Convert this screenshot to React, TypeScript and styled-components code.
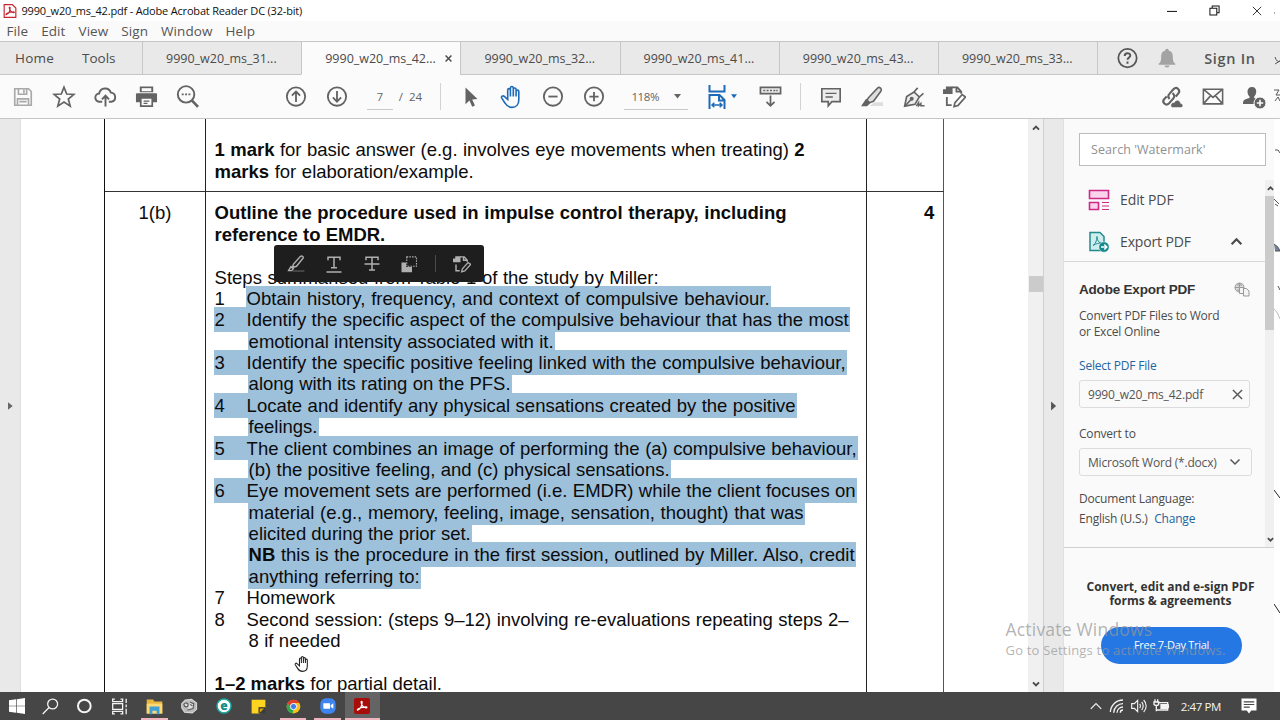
import { ReactNode } from 'react'
import styled, { createGlobalStyle, css } from 'styled-components'

const GlobalStyle = createGlobalStyle`
  * {
    box-sizing: border-box;
  }

  body {
    margin: 0;
    overflow: hidden;
    font-family: 'Open Sans', 'Noto Sans', sans-serif;
    color: #4b4b4b;
  }
`

const Screen = styled.div`
  position: relative;
  width: 1280px;
  height: 720px;
  display: flex;
  flex-direction: column;
  overflow: hidden;
  background: #fff;
`

const Text = styled.span<{ $size?: number; $ls?: number; $color?: string; $weight?: number }>`
  font-size: ${p => p.$size ?? 12}px;
  letter-spacing: ${p => (p.$ls === undefined ? 'inherit' : `${p.$ls}px`)};
  color: ${p => p.$color ?? 'inherit'};
  font-weight: ${p => p.$weight ?? 400};
  white-space: nowrap;
`

/* ---------- title and menu ---------- */

const TitleBar = styled.header`
  height: 21px;
  display: flex;
  align-items: center;
  padding-left: 3px;
  gap: 4.5px;
  color: #111;
`

const WindowButtons = styled.div`
  margin-left: auto;
  display: flex;
  align-items: center;
  gap: 32px;
  padding-right: 18.5px;
  height: 19px;
`

const MenuBar = styled.nav`
  height: 20px;
  display: flex;
  align-items: center;
  padding-left: 6.5px;
  gap: 13px;
  background: #fafafa;
  color: #555;
`

/* ---------- tabs ---------- */

const TabBar = styled.div`
  height: 34px;
  display: flex;
  background: #e9e9e9;
  border-top: 1px solid #c6c6c6;
`

const HomeTabs = styled.div`
  width: 142px;
  display: flex;
  align-items: center;
  padding-left: 15px;
  gap: 28px;
  border-bottom: 1px solid #c6c6c6;
`

const Tab = styled.div<{ $active?: boolean }>`
  width: 159.2px;
  display: flex;
  align-items: center;
  padding-left: 23px;
  border-left: 1px solid #c6c6c6;
  border-bottom: 1px solid ${p => (p.$active ? '#fbfbfb' : '#c6c6c6')};
  background: ${p => (p.$active ? '#fbfbfb' : 'transparent')};

  & > svg {
    margin-left: 9px;
  }
`

const Account = styled.div`
  flex: 1;
  display: flex;
  align-items: center;
  padding-left: 19px;
  border-left: 1px solid #c6c6c6;
  border-bottom: 1px solid #c6c6c6;
  color: #555;

  & > svg {
    margin-right: 19px;
  }

  & > span {
    margin-left: 8px;
  }
`

/* ---------- toolbar ---------- */

const ToolBar = styled.div`
  height: 44px;
  display: flex;
  align-items: center;
  padding-left: 2.5px;
  background: #fbfbfb;
  border-bottom: 1px solid #c6c6c6;
  color: #636363;

  & > * {
    flex: none;
  }
`

const Slot = styled.div<{ $w?: number; $color?: string }>`
  width: ${p => p.$w ?? 41.2}px;
  height: 100%;
  display: flex;
  align-items: center;
  justify-content: center;
  color: ${p => p.$color ?? 'inherit'};
`

const Spacer = styled.div<{ $w: number }>`
  width: ${p => p.$w}px;
`

const Divider = styled.div`
  width: 1px;
  height: 27px;
  background: #d2d2d2;
`

const Field = styled.div<{ $w: number }>`
  width: ${p => p.$w}px;
  height: 26px;
  display: flex;
  align-items: center;
  justify-content: space-between;
  padding: 0 7px 0 7px;
  border-bottom: 1px solid #cacaca;
`

const PageField = styled(Field)`
  justify-content: center;
`

/* ---------- workspace ---------- */

const Workspace = styled.main`
  height: 573px;
  display: flex;
  overflow: hidden;

  & > * {
    flex: none;
  }
`

const Rail = styled.div<{ $w: number }>`
  width: ${p => p.$w}px;
  display: flex;
  align-items: center;
  justify-content: center;
  background: #e9e9e9;
  border-right: 1px solid #e0e0e0;
`

const Page = styled.div`
  position: relative;
  width: 1007px;
  padding-left: 83px;
  overflow: hidden;
`

const Table = styled.div`
  width: 840px;
  height: 600px;
  display: grid;
  grid-template-columns: 101px 661px 77px;
  grid-template-rows: 73px 1fr;
  border-left: 1px solid #111;
  font-family: 'Liberation Sans', Arial, sans-serif;
  font-size: 18.5px;
  line-height: 21.375px;
  color: #0c0c0c;
`

const Cell = styled.div<{ $last?: boolean; $top: number; $align?: string }>`
  padding: ${p => p.$top}px 8.6px 0;
  text-align: ${p => p.$align ?? 'left'};
  border-right: 1px solid ${p => (p.$last ? '#555' : '#222')};
  border-bottom: 1px solid #333;
`

const Body = styled.div`
  isolation: isolate;
`

const marked = css`
  &::before {
    content: '';
    position: absolute;
    z-index: -1;
    inset: -2px -1px -1.6px -1px;
    background: #9dc0db;
  }
`

const Row = styled.div`
  height: 21.375px;
  display: flex;
`

const Num = styled.div<{ $marked?: boolean }>`
  position: relative;
  width: 32px;
  ${p => p.$marked && marked}
`

const Line = styled.div<{ $w: number; $indent?: boolean; $marked?: boolean }>`
  position: relative;
  width: ${p => p.$w}px;
  height: 21.375px;
  margin-left: ${p => (p.$indent ? 34 : 0)}px;
  white-space: nowrap;
  text-align-last: justify;
  ${p => p.$marked && marked}
`

const Popup = styled.div`
  position: absolute;
  left: 253px;
  top: 126px;
  width: 210px;
  height: 37px;
  display: flex;
  align-items: center;
  padding-left: 4px;
  border-radius: 3px;
  background: #1e1e1e;
  color: #b0b0b0;
`

const PopupDivider = styled.div`
  width: 1px;
  height: 17px;
  margin: 0 7px;
  background: #4a4a4a;
`

const HandCursor = styled.div`
  position: absolute;
  left: 273px;
  top: 536px;
  line-height: 0;
`

const ScrollBar = styled.div`
  width: 16px;
  display: flex;
  flex-direction: column;
  align-items: center;
  padding: 5px 0 4px;
  background: #f0f0f0;
  border-right: 1px solid #cfcfcf;
`

const Thumb = styled.div<{ $w: number; $h: number; $mt: number }>`
  width: ${p => p.$w}px;
  height: ${p => p.$h}px;
  margin-top: ${p => p.$mt}px;
  margin-bottom: auto;
  background: #cbcbcb;
`

/* ---------- side panel ---------- */

const Side = styled.aside`
  width: 210px;
  display: flex;
  flex-direction: column;
  background: #fafafa;
`

const SearchBox = styled.div`
  width: 187px;
  height: 33px;
  margin: 14px 0 14px 15px;
  padding: 0 11px;
  display: flex;
  align-items: center;
  flex: none;
  border: 1px solid #bcbcbc;
  background: #fff;
  color: #909090;
`

const ToolsArea = styled.div`
  height: 368px;
  display: flex;
  border-bottom: 1px solid #d0d0d0;
`

const Tools = styled.div`
  width: 201px;
`

const ToolRow = styled.div`
  height: 42px;
  display: flex;
  align-items: center;
  padding: 0 22px 3px 24px;

  & > span {
    margin: 0 auto 0 10px;
  }
`

const ToolBody = styled.div`
  display: flex;
  flex-direction: column;
  align-items: flex-start;
  margin-top: -3px;
  padding: 17px 0 0 15px;
  border-top: 1px solid #d8d8d8;
  letter-spacing: -0.2px;
`

const Heading = styled.div`
  width: 171px;
  height: 20px;
  display: flex;
  align-items: center;
  justify-content: space-between;
  font-family: 'Liberation Sans', Arial, sans-serif;
`

const Para = styled.div<{ $mt: number }>`
  display: flex;
  gap: 6.5px;
  height: 16px;
  line-height: 16px;
  margin-top: ${p => p.$mt}px;
`

const Box = styled.div<{ $w: number; $mt: number }>`
  width: ${p => p.$w}px;
  height: 28px;
  margin-top: ${p => p.$mt}px;
  display: flex;
  align-items: center;
  justify-content: space-between;
  padding: 0 6px 0 8px;
  border: 1px solid #dcdcdc;
  border-radius: 3px;
  color: #555;
`

const SideScroll = styled.div`
  width: 9px;
  display: flex;
  flex-direction: column;
  align-items: flex-end;
  padding: 5px 0 4px;
  background: #f0f0f0;
`

const Promo = styled.div`
  display: flex;
  flex-direction: column;
  align-items: center;
  padding: 31.5px 0 0 3px;
  line-height: 14.5px;
  color: #333;
`

const TrialButton = styled.div`
  width: 141px;
  height: 37px;
  margin: 18.5px 0 0 2px;
  display: flex;
  align-items: center;
  justify-content: center;
  border-radius: 19px;
  background: #2577e3;
  color: #fff;
`

const Activate = styled.div`
  position: absolute;
  left: 1005.5px;
  top: 617px;
  display: flex;
  flex-direction: column;
  color: rgba(150, 150, 150, 0.72);
`

const EdgeStrip = styled.div`
  position: absolute;
  right: 0;
  top: 0;
  line-height: 0;
`

/* ---------- taskbar ---------- */

const TaskBar = styled.footer`
  height: 28px;
  display: flex;
  background: #464646;
  color: #f4f4f4;
`

const Task = styled.div<{ $open?: boolean; $active?: boolean }>`
  width: 34.6px;
  display: flex;
  align-items: center;
  justify-content: center;
  border: solid #464646;
  border-width: 0 ${p => (p.$open && !p.$active ? 4 : 0)}px;
  background: ${p => (p.$active ? '#646464' : 'transparent')};
  box-shadow: ${p => (p.$open ? 'inset 0 -2px #f0b4bf' : 'none')};

  &:first-child {
    width: 33.6px;
  }
`

const Tray = styled.div`
  margin-left: auto;
  display: flex;
  align-items: center;
  gap: 6px;
  padding-right: 22px;
`

/* ---------- icons ---------- */

const Icon = styled.svg`
  flex: none;
`

const Svg = ({ s = 22, w = 1.8, fill = 'none', children }: { s?: number; w?: number; fill?: string; children: ReactNode }) => (
  <Icon width={s} height={s} viewBox='0 0 24 24' fill={fill} stroke='currentColor' strokeWidth={w}>
    {children}
  </Icon>
)

const SaveIcon = () => (
  <Svg><path d='M3 3h15l3 3v15H3zM7 3v6h9V3M13 4v4M6 21v-7h12v7M8 17h8' /></Svg>
)

const StarIcon = () => (
  <Svg s={24} w={1.7}><path d='M12 2.2l2.7 6.8 7.2.4-5.6 4.6 1.9 7.1-6.2-4-6.2 4 1.9-7.1L2.1 9.4l7.2-.4z' /></Svg>
)

const CloudIcon = () => (
  <Svg s={23} w={2}>
    <path d='M8.5 17.5H6a4.3 4.3 0 01-.6-8.6A6.3 6.3 0 0117.6 8a4.8 4.8 0 01.6 9.5h-2.7M12 22.5v-11M8.3 15l3.7-3.8 3.7 3.8' />
  </Svg>
)

const PrintIcon = () => (
  <Svg s={23} fill='currentColor' w={0}>
    <path d='M5 1.500h14v6H5zM2 8.500h20a1 1 0 011 1V18H1V9.500a1 1 0 011-1z' />
    <path d='M7 3.300h10v3.200H7z' fill='#fbfbfb' />
    <path d='M6 13.500v8.500h12v-8.500z' fill='#fbfbfb' stroke='currentColor' strokeWidth='1.800' />
    <path d='M9 16.800h6M9 19.300h4' stroke='currentColor' strokeWidth='1.300' />
  </Svg>
)

const FindIcon = () => (
  <Svg s={23} w={2}>
    <circle cx='10.500' cy='9.800' r='8.600' />
    <path d='M16.500 16l6.500 6.800' strokeWidth='2.800' />
    <path d='M6 9.800h2M9.500 9.800h2M13 9.800h2' strokeWidth='2' />
  </Svg>
)

const CircleIcon = ({ d }: { d: string }) => (
  <Svg s={22} w={2}>
    <circle cx='12' cy='11.500' r='10' />
    <path d={d} />
  </Svg>
)

const PointerIcon = () => (
  <Svg fill='currentColor' w={0}><path d='M6 1.500v18.300l4.300-4 3 6.700 3-1.300-3-6.500 5.800-.5z' /></Svg>
)

const HAND = 'M7.700 14.500V5.200c0-2.100 2.700-2.100 2.700 0V3.100c0-2.200 2.900-2.200 2.900 0v1.400c0-2 2.800-2 2.800 0v2.100c0-2 2.700-2 2.700 0v8.200c0 4.500-2.500 7.600-6.800 7.600-3.600 0-5.400-1.700-6.900-4.200l-3.300-5.100c-1-1.800 1.100-3 2.500-1.700z'

const HandIcon = () => (
  <Svg s={24} w={1.600}><path d={HAND + 'M10.400 4.500v7M13.300 4v7.500M16.100 5v6.500'} /></Svg>
)

const Caret = () => (
  <svg width='7' height='5' viewBox='0 0 7 5' fill='currentColor'><path d='M0 0h7L3.500 4.500z' /></svg>
)

const FitIcon = () => (
  <Svg s={24} w={2}>
    <path d='M4.500 0v6.500h15V0M4.500 24V10h10l5 5v9M14 10v5.500h5.500' />
    <path d='M7 20h10M9.300 17.700L7 20l2.300 2.300M14.700 17.700L17 20l-2.300 2.300' strokeWidth='1.500' />
  </Svg>
)

const ReadIcon = () => (
  <Svg s={23}>
    <path d='M1.500 2.500h21v6.500h-21z' fill='#ececec' />
    <path d='M4.500 5.800h2M8 5.800h2M11.500 5.800h2M15 5.800h2M18 5.800h1.500' strokeWidth='1.600' />
    <path d='M12 11v10.500M7.800 17.500l4.200 4.200 4.200-4.200' />
  </Svg>
)

const CommentIcon = () => (
  <Svg><path d='M2 3h20v14h-9l-4 4.500V17H2z' fill='#ececec' /><path d='M6 8h12M6 12h8' strokeWidth='1.500' /></Svg>
)

const MarkerIcon = () => (
  <Svg s={23} w={1.600}>
    <path d='M9 22h14v-4h-9z' fill='#dedede' stroke='none' />
    <path d='M8 13L17.500 3c1.800-1.500 4.800 1 3.400 3.300L13 17l-4 1.500-3-2.500z' fill='#dedede' />
    <path d='M5.500 15.500l3.500 3-3 3H1.500z' fill='currentColor' />
  </Svg>
)

const PenIcon = () => (
  <Svg s={22} w={1.800}>
    <path d='M1.800 22L4 11.500 12 6.500 17.800 12 13 20z' fill='#ececec' />
    <path d='M2.500 21.500L9 14.500' />
    <path d='M12 6.500l4-4.500M17.800 12l4.500-4' />
    <circle cx='9.500' cy='14' r='1.300' fill='currentColor' />
    <path d='M14.500 22l2.500-4v3.500l2.500-2.500v2.500h4' strokeWidth='1.600' />
  </Svg>
)

const EditDocIcon = ({ s = 23 }: { s?: number }) => (
  <Svg s={s} w={1.900}>
    <path d='M0 4.500h3V1.500h7v8H0z' fill='currentColor' stroke='none' />
    <path d='M9 2.500h6l4 4.500v2M14 2v5h5M4 12.500V21h5' />
    <path d='M11.500 22.500l1-4L20 10l3.500 2.500-7.800 8.800z' strokeWidth='1.700' />
  </Svg>
)

const LinkIcon = () => (
  <Svg s={23} w={2.200}>
    <path d='M10 14.500c-2-2-1.700-3.700 0-5.500l4-4.500c3.500-3.500 8 1 5 4.500l-2.500 3M13 8.500c2.500 2 2.500 4 .5 6l-4 4.500c-3.500 3.500-8-1-5-4.500l2.500-2.500' />
    <path d='M12.500 23c-2-3 1-5 2.500-4 1.500-4 6-3 6 .5 2.500 0 3 2.500 1.500 3.500z' fill='currentColor' strokeWidth='0.500' />
  </Svg>
)

const MailIcon = () => (
  <Svg s={22} w={1.700}><path d='M1.500 3.500h21v16h-21zM1.500 3.500l10.500 9 10.500-9M1.500 19.500l8-9M22.500 19.500l-8-9' /></Svg>
)

const UserIcon = () => (
  <Svg s={24} w={0} fill='currentColor'>
    <path d='M10 2c3 0 4.500 2 4.200 5-.2 2-1 3.500-2 4.500v1.500l3 1.500v4.500H1c0-4 1-4.500 6.500-6v-1.500c-1-1-1.800-2.500-2-4.500C5.300 4 7 2 10 2z' />
    <circle cx='18' cy='18' r='6' stroke='#fbfbfb' strokeWidth='1' />
    <path d='M14.800 18h6.400M18 14.800v6.400' stroke='#fbfbfb' strokeWidth='1.600' />
  </Svg>
)

const Chevron = ({ s = 12, w = 4, down }: { s?: number; w?: number; down?: boolean }) => (
  <Svg s={s} w={w}><path d={down ? 'M3 7l9 9 9-9' : 'M3 17l9-9 9 9'} /></Svg>
)

const Cross = ({ s, w = 2 }: { s: number; w?: number }) => (
  <Svg s={s} w={w}><path d='M2 2l20 20M22 2L2 22' /></Svg>
)

const ACROBAT = 'M6 18c3-1 6-6 6.200-11.500.1-1.800-1.700-1.800-1.500 0 .5 4 4 8.500 7.500 8.500 1.600 0 1.600-1.600 0-1.700-4 0-8.500 1-12.200 3.200-1.500 1-1 2 0 1.500z'

const AppIcon = () => (
  <Svg s={14} w={2}>
    <path d='M2 1h14l6 6v16H2z' fill='#fff' stroke='#c5282f' />
    <path d={ACROBAT} fill='none' stroke='#c5282f' />
  </Svg>
)

/* ---------- data ---------- */

const menu = ['File', 'Edit', 'View', 'Sign', 'Window', 'Help']

const tabs = ['31', '42', '32', '41', '43', '33']

type Entry = { n?: string; w: number; text: ReactNode; marked?: boolean }

const entries: Entry[] = [
  { n: '1', w: 523, text: 'Obtain history, frequency, and context of compulsive behaviour.', marked: true },
  { n: '2', w: 602, text: 'Identify the specific aspect of the compulsive behaviour that has the most', marked: true },
  { w: 305, text: 'emotional intensity associated with it.', marked: true },
  { n: '3', w: 599, text: 'Identify the specific positive feeling linked with the compulsive behaviour,', marked: true },
  { w: 262, text: 'along with its rating on the PFS.', marked: true },
  { n: '4', w: 549, text: 'Locate and identify any physical sensations created by the positive', marked: true },
  { w: 69, text: 'feelings.', marked: true },
  { n: '5', w: 610, text: 'The client combines an image of performing the (a) compulsive behaviour,', marked: true },
  { w: 421, text: '(b) the positive feeling, and (c) physical sensations.', marked: true },
  { n: '6', w: 609, text: 'Eye movement sets are performed (i.e. EMDR) while the client focuses on', marked: true },
  { w: 555, text: 'material (e.g., memory, feeling, image, sensation, thought) that was', marked: true },
  { w: 222, text: 'elicited during the prior set.', marked: true },
  { w: 606, text: <><b>NB</b> this is the procedure in the first session, outlined by Miller. Also, credit</>, marked: true },
  { w: 171, text: 'anything referring to:', marked: true },
  { n: '7', w: 88, text: 'Homework' },
  { n: '8', w: 602, text: 'Second session: (steps 9–12) involving re-evaluations repeating steps 2–' },
  { w: 92, text: '8 if needed' },
]

/* ---------- parts ---------- */

const Titles = () => (
  <>
    <TitleBar>
      <AppIcon />
      <Text $size={11} $ls={-0.18}>9990_w20_ms_42.pdf - Adobe Acrobat Reader DC (32-bit)</Text>
      <WindowButtons>
        <Svg s={10} w={2.400}><path d='M0 13h24' /></Svg>
        <Svg s={11} w={2.200}><path d='M2 7h15v15H2zM7 7V2h15v15h-5' /></Svg>
        <Cross s={10} />
      </WindowButtons>
    </TitleBar>
    <MenuBar>
      {menu.map(item => <Text $size={13.5} $ls={0.08} key={item}>{item}</Text>)}
    </MenuBar>
  </>
)

const Tabs = () => (
  <TabBar>
    <HomeTabs>
      <Text $size={13.5} $ls={0.2}>Home</Text>
      <Text $size={13.5}>Tools</Text>
    </HomeTabs>
    {tabs.map(tab => (
      <Tab key={tab} $active={tab === '42'}>
        <Text $size={12.5}>9990_w20_ms_{tab}...</Text>
        {tab === '42' && <Cross s={7} w={5} />}
      </Tab>
    ))}
    <Account>
      <Svg s={21} w={2}>
        <circle cx='12' cy='11.500' r='10.500' />
        <path d='M8.800 9c0-4 6.400-4 6.400-.5 0 2.500-3.200 2.500-3.200 5M12 15.500v2.500' strokeWidth='2.200' />
      </Svg>
      <Svg s={20} fill='#a3a3a3' w={0}><path d='M12 1c1.500 0 2 1 2 2 4 1 5 4 5 8 0 5 1 6 3 8v1H2v-1c2-2 3-3 3-8 0-4 1-7 5-8 0-1 .5-2 2-2zM9 21h6c0 3-6 3-6 0z' /></Svg>
      <Text $size={14.5} $weight={600} $ls={0.7}>Sign In</Text>
    </Account>
  </TabBar>
)

const DocToolbar = () => (
  <ToolBar>
    <Slot $color='#a9a9a9'><SaveIcon /></Slot>
    <Slot><StarIcon /></Slot>
    <Slot><CloudIcon /></Slot>
    <Slot $w={40}><PrintIcon /></Slot>
    <Slot $w={43.4}><FindIcon /></Slot>
    <Spacer $w={65.5} />
    <Slot><CircleIcon d='M12 17.500V6M7.500 10.500L12 6l4.500 4.500' /></Slot>
    <Slot><CircleIcon d='M12 5.500V17M7.500 12.500L12 17l4.500-4.500' /></Slot>
    <Spacer $w={9.5} />
    <PageField $w={26}><Text $size={11}>7</Text></PageField>
    <Spacer $w={6} />
    <Text $size={11.5}>/&nbsp; 24</Text>
    <Spacer $w={18} />
    <Divider />
    <Spacer $w={9.5} />
    <Slot><PointerIcon /></Slot>
    <Slot $color='#1d6bb8'><HandIcon /></Slot>
    <Slot $w={40}><CircleIcon d='M7 11.500h10' /></Slot>
    <Slot><CircleIcon d='M7 11.500h10M12 6.500v10' /></Slot>
    <Spacer $w={10.2} />
    <Field $w={64}><Text $size={11.5} $ls={-0.4}>118%</Text><Caret /></Field>
    <Spacer $w={17} />
    <Slot $w={24} $color='#1d6bb8'><FitIcon /></Slot>
    <Spacer $w={2} />
    <Slot $w={6} $color='#1d6bb8'><Caret /></Slot>
    <Spacer $w={12} />
    <Slot><ReadIcon /></Slot>
    <Spacer $w={9} />
    <Divider />
    <Spacer $w={10} />
    <Slot><CommentIcon /></Slot>
    <Slot><MarkerIcon /></Slot>
    <Slot><PenIcon /></Slot>
    <Slot><EditDocIcon /></Slot>
    <Spacer $w={175.5} />
    <Slot><LinkIcon /></Slot>
    <Slot><MailIcon /></Slot>
    <Slot><UserIcon /></Slot>
  </ToolBar>
)

const SelectionPopup = () => (
  <Popup>
    <Slot $w={37.5}><Svg s={19} w={1.800}><path d='M7 17l1-4L17 3c2-1 4 0 3.500 2L12 15.500zM2 21l3-5 3 2.500-2 2.500z' /><path d='M7 21.500h15' stroke='#555' /></Svg></Slot>
    <Slot $w={37.5}><Svg s={18} w={2}><path d='M4 7V3h16v4M12 3v14M8 17h8M2 22.500h20' /></Svg></Slot>
    <Slot $w={37.5}><Svg s={18} w={2}><path d='M4 7V3h16v4M12 3v17M8 20h8M2 12h20' /></Svg></Slot>
    <Slot $w={37.5}>
      <Svg s={18} w={1.500}>
        <path d='M2 10h6v6h8v7H2z' fill='currentColor' stroke='none' />
        <path d='M9 2.500h13V15H9z' strokeDasharray='2 1.500' />
      </Svg>
    </Slot>
    <PopupDivider />
    <Slot $w={37.5}><EditDocIcon s={18} /></Slot>
  </Popup>
)

const Document = () => (
  <Page>
    <Table>
      <Cell $top={20} />
      <Cell $top={20.4}>
        <Line $w={590}><b>1 mark</b> for basic answer (e.g. involves eye movements when treating) <b>2</b></Line>
        <Line $w={259}><b>marks</b> for elaboration/example.</Line>
      </Cell>
      <Cell $top={20} $last />
      <Cell $top={10} $align='center'>1(b)</Cell>
      <Cell $top={10.4}>
        <Body>
          <Line $w={572}><b>Outline the procedure used in impulse control therapy, including</b></Line>
          <Line $w={170}><b>reference to EMDR.</b></Line>
          <Row />
          <Line $w={444}>Steps summarised from Table 1 of the study by Miller:</Line>
          {entries.map((e, i) => (
            <Row key={i}>
              {e.n && <Num $marked={e.marked && e.n !== '1'}>{e.n}</Num>}
              <Line $w={e.w} $indent={!e.n} $marked={e.marked}>{e.text}</Line>
            </Row>
          ))}
          <Row />
          <Line $w={227}><b>1–2 marks</b> for partial detail.</Line>
        </Body>
      </Cell>
      <Cell $top={10} $last $align='right'><b>4</b></Cell>
    </Table>
    <SelectionPopup />
    <HandCursor>
      <svg width='17' height='18' viewBox='0 0 24 24' fill='#fff' stroke='#222' strokeWidth='1.500'>
        <path d={HAND} /><path d='M10.400 4.500v6M13.300 4v6.500M16.100 5v5.500' />
      </svg>
    </HandCursor>
  </Page>
)

const SidePanel = () => (
  <Side>
    <SearchBox><Text $size={12.5} $ls={0.05}>Search 'Watermark'</Text></SearchBox>
    <ToolsArea>
      <Tools>
        <ToolRow>
          <svg width='22' height='22' viewBox='0 0 22 22' fill='#fbd3ea' stroke='#cc2a86' strokeWidth='1.600'>
            <path d='M1.500 1.500h19v8h-19zM1.500 13.500h9v7h-9z' />
            <path d='M14 13.500h7M14 17h7M14 20.500h7' strokeWidth='1' />
          </svg>
          <Text $size={14} $ls={-0.1}>Edit PDF</Text>
        </ToolRow>
        <ToolRow>
          <svg width='22' height='22' viewBox='0 0 22 22' fill='none' stroke='#23898c' strokeWidth='1.500'>
            <path d='M2 1.500h10l4 4v14H2z' fill='#cdeeee' />
            <path d='M5 14.500c2-1 4-5 4-9 0 4 2 6.500 5 6.500-3 0-6 .5-9 2.500z' strokeWidth='1' />
            <circle cx='16' cy='16' r='5.200' fill='#15898d' stroke='#fafafa' strokeWidth='0.500' />
            <path d='M13 16h5.500M16.300 13.500l2.500 2.500-2.500 2.500' stroke='#fff' />
          </svg>
          <Text $size={14} $ls={-0.15}>Export PDF</Text>
          <Chevron s={13} />
        </ToolRow>
        <ToolBody>
          <Heading>
            <Text $size={13.5} $weight={700} $color='#333'>Adobe Export PDF</Text>
            <svg width='16' height='15' viewBox='0 0 16 15' fill='#ddd' stroke='#999'>
              <circle cx='5.500' cy='5.500' r='4.500' /><path d='M1 5.500h9M3 3h5M3 8h5M5.500 1v9' />
              <path d='M5.500 5.500h4v6h-4zM9.500 6.500h3l2.500 2.500v5h-5.500z' fill='#f4f4f4' />
            </svg>
          </Heading>
          <Para $mt={8.5}><Text>Convert PDF Files to Word</Text></Para>
          <Para $mt={0}><Text>or Excel Online</Text></Para>
          <Para $mt={18}><Text $color='#2265a0'>Select PDF File</Text></Para>
          <Box $w={171} $mt={6.5}><Text>9990_w20_ms_42.pdf</Text><Cross s={11} w={3} /></Box>
          <Para $mt={18}><Text>Convert to</Text></Para>
          <Box $w={173} $mt={6}><Text>Microsoft Word (*.docx)</Text><Slot $w={20}><Chevron s={12} w={3} down /></Slot></Box>
          <Para $mt={15}><Text>Document Language:</Text></Para>
          <Para $mt={4}><Text>English (U.S.)</Text><Text $color='#2265a0'>Change</Text></Para>
        </ToolBody>
      </Tools>
      <SideScroll>
        <Chevron s={7} w={6} />
        <Thumb $w={9} $h={134} $mt={4} />
        <Chevron s={7} w={6} down />
      </SideScroll>
    </ToolsArea>
    <Promo>
      <Text $weight={700}>Convert, edit and e-sign PDF</Text>
      <Text $weight={700}>forms &amp; agreements</Text>
      <TrialButton><Text $size={11} $ls={-0.3}>Free 7-Day Trial</Text></TrialButton>
    </Promo>
  </Side>
)

const Taskbar = () => (
  <TaskBar>
    <Task><Svg s={16} fill='#fff' w={0}><path d='M0 3.500l10.500-1.500v9.500H0zM11.500 1.800L24 0v11.500H11.500zM0 12.500h10.500V22L0 20.500zM11.500 12.500H24V24l-12.500-1.800z' /></Svg></Task>
    <Task><Svg s={17} w={1.800}><circle cx='15' cy='8.500' r='7' /><path d='M10 13.500L1 22.500' /></Svg></Task>
    <Task><Svg s={16} w={3}><circle cx='11' cy='12' r='9.500' /></Svg></Task>
    <Task><Svg s={17} w={1.800}><path d='M0 1.500h4M12 1.500h4M0 22.500h4M12 22.500h4M1 1v4h14V1M1 8h14v8H1zM1 23v-4h14v4M20 1v6M20 15v8M20 9v4' /></Svg></Task>
    <Task $open>
      <Svg s={17} w={0}>
        <path d='M1 2h9l2 3h11v17H1z' fill='#e9b53a' /><path d='M1 8h22v14H1z' fill='#fbd977' />
        <path d='M5 12h14v11h-4v-5H9v5H5z' fill='#409fd5' />
      </Svg>
    </Task>
    <Task>
      <Svg s={17} w={1.500}>
        <path d='M1 8l5-5 9-1 7 5v9l-6 5-11-1-4-6z' fill='#b9b9b9' stroke='#d8d8d8' />
        <path d='M4 9c2-3 6-2 6 1s-5 4-6-1zM13 6l5 2-1 7-8 2M13 9l3 2' stroke='#555' fill='#ddd' />
      </Svg>
    </Task>
    <Task>
      <svg width='16' height='16' viewBox='0 0 16 16'>
        <circle cx='8' cy='8' r='7' fill='#fff' stroke='#19a79c' strokeWidth='1.500' />
        <text x='8' y='12' textAnchor='middle' fontFamily='Open Sans' fontWeight='800' fontSize='12' fill='#128c84'>e</text>
      </svg>
    </Task>
    <Task><Svg s={15} w={0}><path d='M1 1h22v12l-9 10H1z' fill='#fdd41f' /><path d='M12 13h11v10H12z' fill='#3b3b3b' /><path d='M14 15h7l-7 7z' fill='#d6a400' /></Svg></Task>
    <Task $open>
      <Svg s={15} w={0}>
        <circle cx='12' cy='12' r='11' fill='#fbc116' />
        <path d='M2.500 6.500a11 11 0 0119 0H12l-4.800 8.300z' fill='#e2402f' />
        <path d='M2.500 6.500L7.200 14.800 12 17.500 10.500 23A11 11 0 012.500 6.500z' fill='#2da94f' />
        <circle cx='12' cy='12' r='5' fill='#3f7fe8' stroke='#fff' strokeWidth='1.500' />
      </Svg>
    </Task>
    <Task $open>
      <Svg s={16} w={0}><rect x='0.500' y='0.500' width='23' height='23' rx='8' fill='#3f85f2' /><path d='M5 8h9c1 0 1 1 1 1v7H6c-1 0-1-1-1-1zM16 11l4-3v8l-4-3z' fill='#fff' /></Svg>
    </Task>
    <Task $open $active>
      <Svg s={16} w={1.800}><rect x='0' y='0' width='24' height='24' rx='3' fill='#a80d0a' stroke='none' /><path d={ACROBAT} stroke='#fff' /></Svg>
    </Task>
    <Tray>
      <Chevron s={14} w={2} />
      <Svg s={16} w={2}><path d='M2 21A19 19 0 0121 3M7 22A14 14 0 0121 8.500M12 22a9 9 0 019-8.500M17 22a4 4 0 014-4' /></Svg>
      <Svg s={16} w={1.700}><path d='M1 8.500h4l5-5v17l-5-5H1zM13 9c1.500 1.500 1.500 4.500 0 6M16 6c3 3 3 9 0 12M19 3c5 5 5 13 0 18' /></Svg>
      <Svg s={16} w={2}><path d='M7 7h15v11H6M22 10.500h1.500v4H22M3 2v4M7 2v4M1.500 6h7v3c0 3-7 3-7 0zM5 12v8' /><path d='M12 10h8v5.500h-8z' fill='currentColor' /></Svg>
      <Spacer $w={0} />
      <Text $size={11.5} $ls={-0.4}>2:47 PM</Text>
      <Spacer $w={7} />
      <Svg s={18} w={0} fill='#fff'><path d='M2 2h20v16h-7l-3 4-3-4H2z' /><path d='M5 6.500h14M5 10h14M5 13.500h8' stroke='#464646' strokeWidth='1.500' /></Svg>
    </Tray>
  </TaskBar>
)

const App = () => {
  return (
    <Screen>
      <GlobalStyle />
      <Titles />
      <Tabs />
      <DocToolbar />
      <Workspace>
        <Rail $w={21}><Svg s={8} fill='#666' w={0}><path d='M6 1l14 11L6 23z' /></Svg></Rail>
        <Document />
        <ScrollBar>
          <Chevron s={8} w={6} />
          <Thumb $w={14} $h={16} $mt={144} />
          <Chevron s={8} w={6} down />
        </ScrollBar>
        <Rail $w={20}><Svg s={10} fill='#555' w={0}><path d='M5 1l12 11L5 23z' /></Svg></Rail>
        <SidePanel />
      </Workspace>
      <Taskbar />
      <Activate>
        <Text $size={17.5} $ls={0.2}>Activate Windows</Text>
        <Text $size={13} $ls={0.2}>Go to Settings to activate Windows.</Text>
      </Activate>
      <EdgeStrip>
        <svg width='6' height='692' viewBox='0 0 6 692' fill='none' stroke='#555'>
          <path d='M0 13h1M1 57q2 6 5 4M1 64l5-3M0 90h5l-3 5h4M1 101l3-4 2 4M1 150h3l2 3M0 199l5 5M1 204l3 2M4 286l2 4' />
          <path d='M0 244q5 3 6 7H1' fill='#75849d' />
          <path d='M0 309q4 3 6 10' stroke='#bbb' />
          <path d='M0 490l6 8M0 604l6 9' stroke='#222' />
        </svg>
      </EdgeStrip>
    </Screen>
  )
}

export default App
